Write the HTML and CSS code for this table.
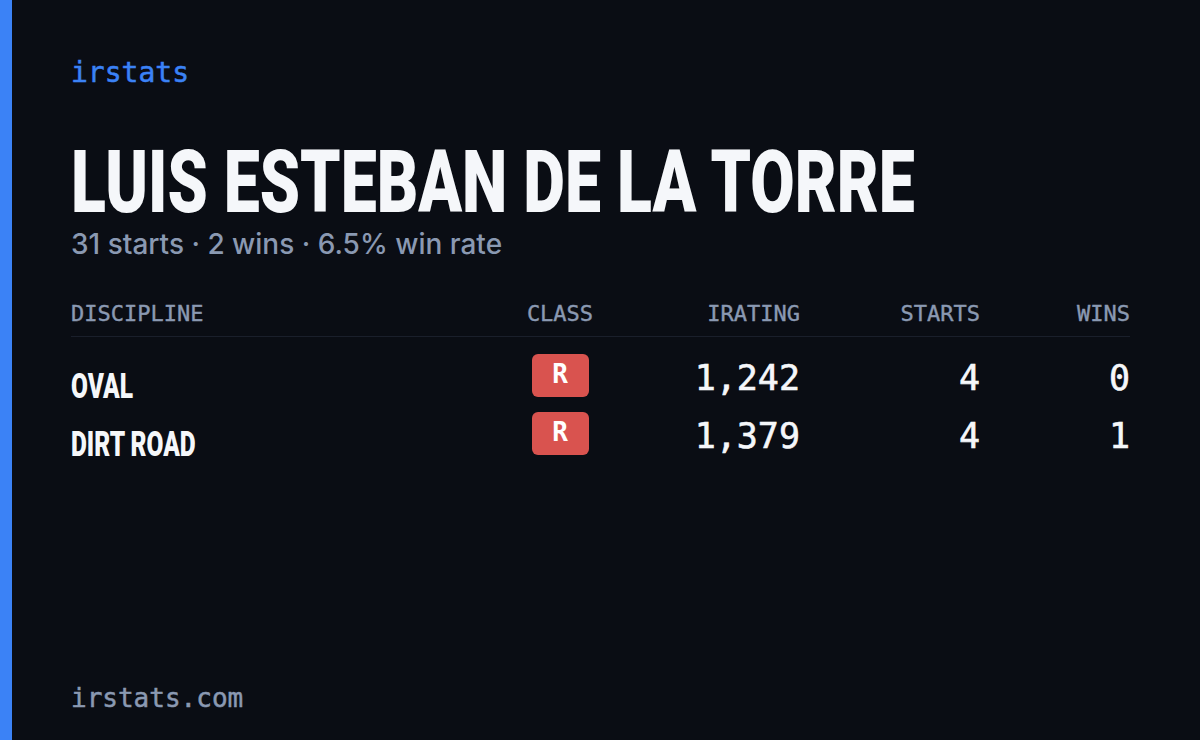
FILE: index.html
```html
<!DOCTYPE html>
<html lang="en">
<head>
<meta charset="utf-8">
<title>irstats – Luis Esteban de la Torre</title>
<link rel="stylesheet" href="styles.css">
</head>
<body>
<div class="card">
  <div class="brand">irstats</div>
  <h1 class="name"><span class="cond">LUIS ESTEBAN DE LA TORRE</span></h1>
  <p class="summary">31 starts · 2 wins · 6.5% win rate</p>
  <div class="table">
    <div class="row head">
      <div class="c-disc">DISCIPLINE</div>
      <div class="c-class">CLASS</div>
      <div class="c-num">IRATING</div>
      <div class="c-num">STARTS</div>
      <div class="c-num">WINS</div>
    </div>
    <div class="row body">
      <div class="c-disc"><span class="cond narrow">OVAL</span></div>
      <div class="c-class"><span class="badge">R</span></div>
      <div class="c-num">1,242</div>
      <div class="c-num">4</div>
      <div class="c-num">0</div>
    </div>
    <div class="row body">
      <div class="c-disc"><span class="cond narrow">DIRT ROAD</span></div>
      <div class="c-class"><span class="badge">R</span></div>
      <div class="c-num">1,379</div>
      <div class="c-num">4</div>
      <div class="c-num">1</div>
    </div>
  </div>
  <div class="footer">irstats.com</div>
</div>
</body>
</html>
```

FILE: styles.css
```css
html, body {
  margin: 0;
  padding: 0;
  background: #0a0d14;
}
.card {
  box-sizing: border-box;
  width: 1200px;
  height: 740px;
  border-left: 12px solid #3b82f6;
  padding: 59px 70px 29px 59px;
  display: flex;
  flex-direction: column;
  background: #0a0d14;
  overflow: hidden;
}
.brand {
  font-family: "DejaVu Sans Mono", monospace;
  font-size: 28px;
  line-height: 1;
  color: #3b82f6;
  -webkit-text-stroke: 0.5px #3b82f6;
}
.name {
  margin: 59px 0 0 0;
  font-family: "Roboto", sans-serif;
  font-weight: 900;
  font-size: 87px;
  line-height: 0.85;
  color: #f5f7fa;
  white-space: nowrap;
}
.cond {
  display: inline-block;
  transform: scaleX(0.74);
  transform-origin: left center;
}
.cond.narrow {
  transform: scaleX(0.70);
}
.summary {
  margin: 10px 0 0 0;
  font-family: "Inter", sans-serif;
  font-weight: 500;
  font-size: 28px;
  line-height: 1;
  color: #8a99b2;
}
.table {
  margin-top: 45px;
  display: flex;
  flex-direction: column;
  gap: 15px;
}
.row {
  display: grid;
  grid-template-columns: 439px 100px 190px 180px 150px;
  align-items: start;
}
.head {
  font-family: "DejaVu Sans Mono", monospace;
  font-size: 22px;
  line-height: 1;
  color: #8a99b2;
  -webkit-text-stroke: 0.4px #8a99b2;
  padding-bottom: 11px;
  border-bottom: 1px solid #1a1f2b;
  margin-bottom: 2px;
}
.body {
  height: 43px;
  color: #f5f7fa;
}
.c-class { text-align: center; }
.c-num { text-align: right; }
.body .c-disc {
  font-family: "Roboto", sans-serif;
  font-weight: 900;
  font-size: 35px;
  line-height: 1;
  padding-top: 15px;
}
.body .c-num {
  font-family: "DejaVu Sans Mono", monospace;
  font-size: 35px;
  line-height: 1;
  padding-top: 7px;
  -webkit-text-stroke: 0.6px #f5f7fa;
}
.badge {
  display: inline-flex;
  align-items: center;
  justify-content: center;
  width: 57px;
  height: 43px;
  border-radius: 6px;
  background: #d9534f;
  color: #ffffff;
  font-family: "DejaVu Sans Mono", monospace;
  font-weight: bold;
  font-size: 26px;
  line-height: 1;
  padding-bottom: 2px;
  box-sizing: border-box;
}
.footer {
  margin-top: auto;
  font-family: "DejaVu Sans Mono", monospace;
  font-size: 26px;
  line-height: 1;
  color: #8a99b2;
  -webkit-text-stroke: 0.5px #8a99b2;
}
```
